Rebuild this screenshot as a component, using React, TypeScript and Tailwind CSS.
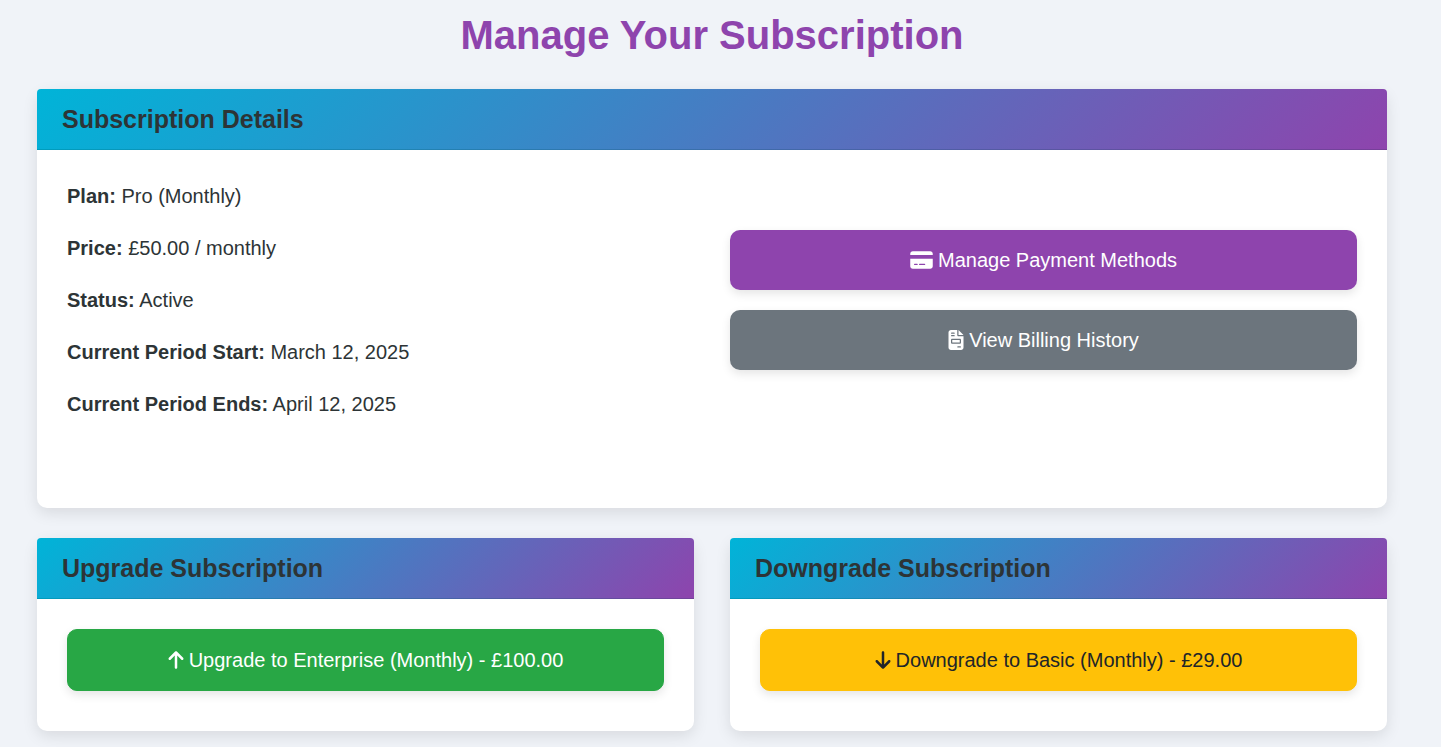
import type { ReactNode } from "react";
import { FaArrowDown, FaArrowUp, FaCreditCard, FaFileInvoice } from "react-icons/fa6";

function Card({ title, children }: { title: string; children: ReactNode }) {
  return (
    <section className="flex flex-col rounded-[10px] bg-white shadow-[0_5px_15px_rgba(0,0,0,0.1)]">
      <h2 className="rounded-t-[4px] border-b border-black/[.125] bg-[linear-gradient(135deg,#00b4d8,#8e44ad)] px-[25px] py-[15px] text-[25px] leading-[30px] font-bold text-[#2d3436]">
        {title}
      </h2>
      {children}
    </section>
  );
}

const details = [
  ["Plan:", "Pro (Monthly)"],
  ["Price:", "£50.00 / monthly"],
  ["Status:", "Active"],
  ["Current Period Start:", "March 12, 2025"],
  ["Current Period Ends:", "April 12, 2025"],
];

const buttonClass =
  "flex w-full cursor-pointer items-center justify-center gap-[5px] rounded-[10px] px-5 py-[15px] text-xl leading-[30px] shadow-[0_4px_10px_rgba(0,0,0,0.1)]";

export default function App() {
  return (
    <main className="min-h-screen bg-[#f0f3f8] pr-[54px] pb-4 pl-[37px] font-['Liberation_Sans',Arial,sans-serif] text-[#2d3436]">
      <h1 className="pt-[11px] pb-[30px] text-center text-[40px] leading-[48px] font-bold text-[#8e44ad]">
        Manage Your Subscription
      </h1>
      <Card title="Subscription Details">
        <div className="grid grid-cols-2 gap-x-9 px-[30px] pt-[30px] pb-[88px]">
          <div className="flex flex-col gap-5">
            {details.map(([label, value]) => (
              <p key={label} className="text-xl leading-8">
                <strong>{label}</strong> {value}
              </p>
            ))}
          </div>
          <div className="flex flex-col gap-5 pt-[50px]">
            <button type="button" className={`${buttonClass} bg-[#8e44ad] text-white`}>
              <FaCreditCard className="h-5 w-[23px]" aria-hidden />
              Manage Payment Methods
            </button>
            <button type="button" className={`${buttonClass} bg-[#6c757d] text-white`}>
              <FaFileInvoice className="h-5 w-4" aria-hidden />
              View Billing History
            </button>
          </div>
        </div>
      </Card>
      <div className="mt-[30px] grid grid-cols-2 gap-9">
        <Card title="Upgrade Subscription">
          <div className="px-[30px] pt-[30px] pb-10">
            <button type="button" className={`${buttonClass} border border-[#28a745] bg-[#28a745] text-white`}>
              <FaArrowUp className="h-5 w-4" aria-hidden />
              Upgrade to Enterprise (Monthly) - £100.00
            </button>
          </div>
        </Card>
        <Card title="Downgrade Subscription">
          <div className="px-[30px] pt-[30px] pb-10">
            <button type="button" className={`${buttonClass} border border-[#ffc107] bg-[#ffc107] text-[#212529]`}>
              <FaArrowDown className="h-5 w-4" aria-hidden />
              Downgrade to Basic (Monthly) - £29.00
            </button>
          </div>
        </Card>
      </div>
    </main>
  );
}
